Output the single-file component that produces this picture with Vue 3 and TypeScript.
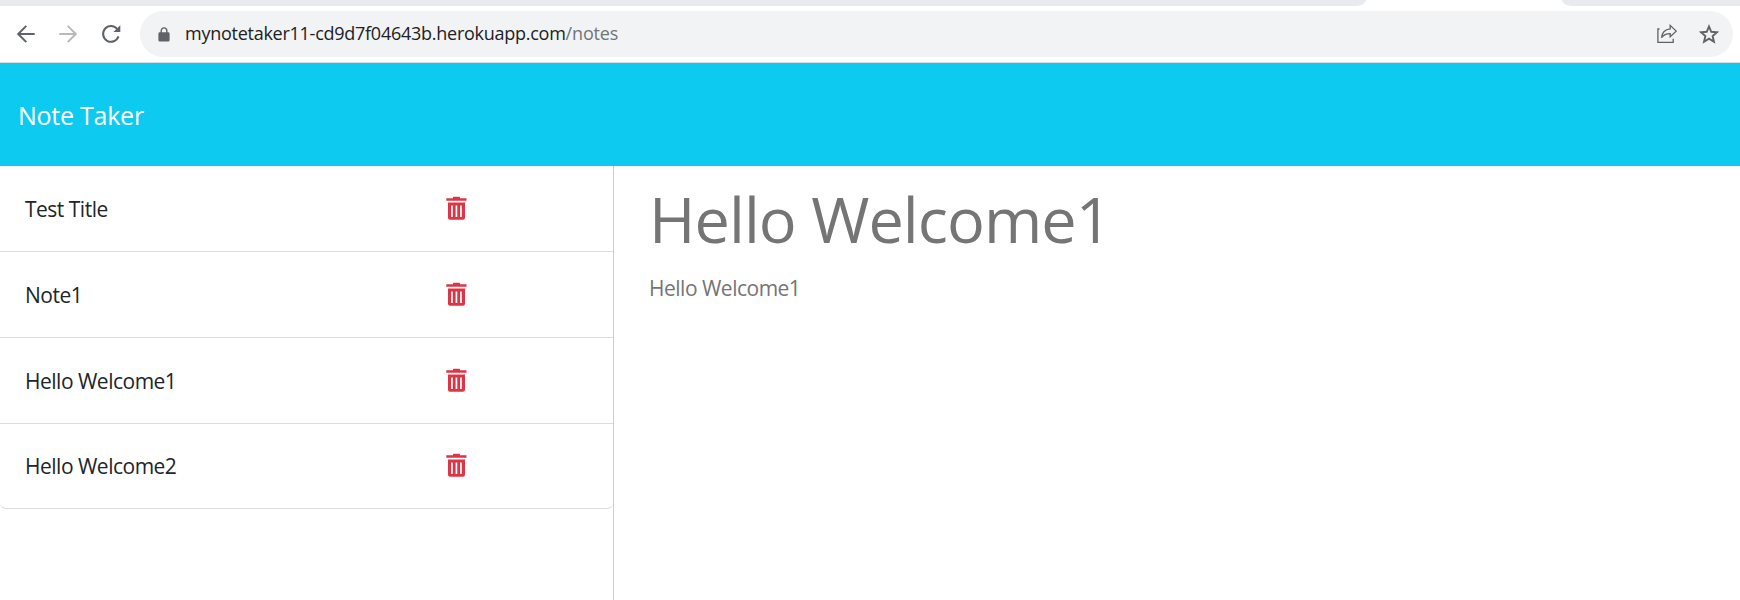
<script setup lang="ts">
import { ref } from 'vue'

interface Note {
  title: string
  text: string
}

const notes = ref<Note[]>([
  { title: 'Test Title', text: 'Test text' },
  { title: 'Note1', text: 'Note1' },
  { title: 'Hello Welcome1', text: 'Hello Welcome1' },
  { title: 'Hello Welcome2', text: 'Hello Welcome2' },
])
const active = ref<Note>(notes.value[2])

function remove(index: number) {
  notes.value.splice(index, 1)
}
</script>

<template>
  <div class="window">
    <div class="tabs">
      <div class="tab-left"></div>
      <div class="tab-right"></div>
    </div>
    <div class="toolbar">
      <svg class="nav" viewBox="0 0 20 20"><path d="M18.7 10H2.2M10.3 1.900L2.200 10l8.100 8.100" /></svg>
      <svg class="nav dim" viewBox="0 0 20 20"><path d="M1.3 10h16.500M9.700 1.900L17.800 10l-8.100 8.100" /></svg>
      <svg class="nav" viewBox="0 0 20 20">
        <path d="M16.200 5A7.900 7.900 0 1 0 17.500 12.400" />
        <path class="solid" d="M19.300 1.200v6.900h-6.900z" />
      </svg>
      <div class="omnibox">
        <svg class="lock" viewBox="0 0 12 15">
          <path d="M1.800 5.300h8.400A1.400 1.400 0 0 1 11.600 6.700v6.500a1.400 1.400 0 0 1-1.400 1.400H1.800A1.400 1.400 0 0 1 .4 13.200V6.700A1.400 1.400 0 0 1 1.800 5.300z" fill="#5f6368" />
          <path d="M3.200 6V3.700a2.800 2.800 0 0 1 5.600 0V6" fill="none" stroke="#5f6368" stroke-width="1.400" />
        </svg>
        <div class="url"><span class="host">mynotetaker11-cd9d7f04643b.herokuapp.com</span><span class="path">/notes</span></div>
        <svg class="share" viewBox="0 0 20 20" fill="none" stroke="#5f6368" stroke-width="1.300">
          <path d="M2.500 5H.9v13.300h15.300v-3.500" />
          <path d="M13.200 1.400l6 5.700-6 5.700V9.600C9 9.600 6.500 10.800 4.500 13.700 5 8.800 8 5.400 13.200 4.800z" />
        </svg>
        <svg class="star" viewBox="0 0 20 20" fill="none" stroke="#5f6368" stroke-width="1.900">
          <path d="M10 2.500l2.250 5.300 5.750.5-4.370 3.770 1.320 5.630L10 14.700 5.050 17.700l1.320-5.630L2 8.300l5.750-.5z" />
        </svg>
      </div>
    </div>
    <header class="navbar"><span class="brand">Note Taker</span></header>
    <main class="content">
      <ul class="list">
        <li v-for="(note, i) in notes" :key="note.title" class="item" @click="active = note">
          <span class="title">{{ note.title }}</span>
          <svg class="trash" viewBox="0 0 21 24" @click.stop="remove(i)">
            <path d="M.3 2.200h6.700V1.500a.7.700 0 0 1 .7-.7h5.600a.7.700 0 0 1 .7.700v.700h6.500v2.600H.3zM2 6.500h17v15.300a2 2 0 0 1-2 2H4a2 2 0 0 1-2-2zM5.100 9.400v11.500h1.700V9.400zM9.600 9.400v11.500h1.700V9.400zM14.100 9.400v11.500h1.700V9.400z" fill="#dc3545" fill-rule="evenodd" />
          </svg>
        </li>
      </ul>
      <section class="detail">
        <h1>{{ active.title }}</h1>
        <p>{{ active.text }}</p>
      </section>
    </main>
  </div>
</template>

<style>
body {
  overflow: hidden;
  background: #fff;
}
</style>

<style scoped>
.window {
  height: 600px;
  display: flex;
  flex-direction: column;
  font-family: 'Open Sans', 'Noto Sans', sans-serif;
  background: #fff;
}
.tabs {
  height: 6px;
  display: flex;
  justify-content: space-between;
}
.tab-left {
  width: 1366px;
  background: #e8eaed;
  border-bottom-right-radius: 10px 6px;
}
.tab-right {
  width: 178px;
  background: #e8eaed;
  border-bottom-left-radius: 10px 6px;
}
.toolbar {
  flex: none;
  height: 57px;
  box-sizing: border-box;
  border-bottom: 1px solid #dadce0;
  display: flex;
  align-items: center;
  padding: 0 7px 0 16px;
}
.nav {
  width: 20px;
  height: 20px;
  margin-right: 22px;
  margin-bottom: 1px;
  fill: none;
  stroke: #5f6368;
  stroke-width: 2;
}
.nav:nth-child(2) {
  margin-right: 23px;
}
.nav:nth-child(3) {
  margin-right: 19px;
}
.nav.dim {
  stroke: #bababa;
}
.nav .solid {
  fill: #5f6368;
  stroke: none;
}
.omnibox {
  flex: 1;
  height: 46px;
  border-radius: 23px;
  background: #f1f3f4;
  display: flex;
  align-items: center;
}
.lock {
  width: 12px;
  height: 15px;
  margin: 0 15px 0 18px;
}
.url {
  flex: 1;
  margin-bottom: 2px;
  font-size: 18px;
  line-height: 24px;
  color: #202124;
  white-space: nowrap;
}
.host {
  letter-spacing: -0.26px;
}
.path {
  letter-spacing: -0.15px;
  color: #70757a;
}
.share {
  width: 20px;
  height: 20px;
  margin-right: 22px;
}
.star {
  width: 20px;
  height: 20px;
  margin-right: 14px;
}
.navbar {
  flex: none;
  height: 103px;
  background: #0dcaf0;
  display: flex;
  align-items: center;
  padding: 0 18px;
  box-sizing: border-box;
}
.brand {
  color: #fff;
  font-size: 25px;
  line-height: 38px;
  letter-spacing: -0.25px;
}
.content {
  flex: 1;
  display: flex;
}
.list {
  width: 613px;
  margin: 0;
  padding: 0;
  list-style: none;
  border-right: 1px solid #ccc;
}
.item {
  height: 86px;
  box-sizing: border-box;
  border-bottom: 1px solid #dcdcdc;
  display: flex;
  align-items: center;
  padding-left: 25px;
  cursor: pointer;
}
.item:last-child {
  height: 85px;
  border-radius: 0 0 6px 6px;
}
.title {
  width: 421px;
  font-size: 21px;
  line-height: 32px;
  letter-spacing: -0.5px;
  color: #212529;
}
.trash {
  width: 21px;
  height: 24px;
  margin-bottom: 2px;
}
.detail {
  flex: 1;
  padding: 15px 0 0 35px;
  color: #757575;
}
h1 {
  margin: 0;
  font-size: 63px;
  font-weight: 400;
  line-height: 76px;
  letter-spacing: -0.95px;
}
p {
  margin: 15px 0 0;
  font-size: 21px;
  line-height: 32px;
  letter-spacing: -0.5px;
}
</style>
